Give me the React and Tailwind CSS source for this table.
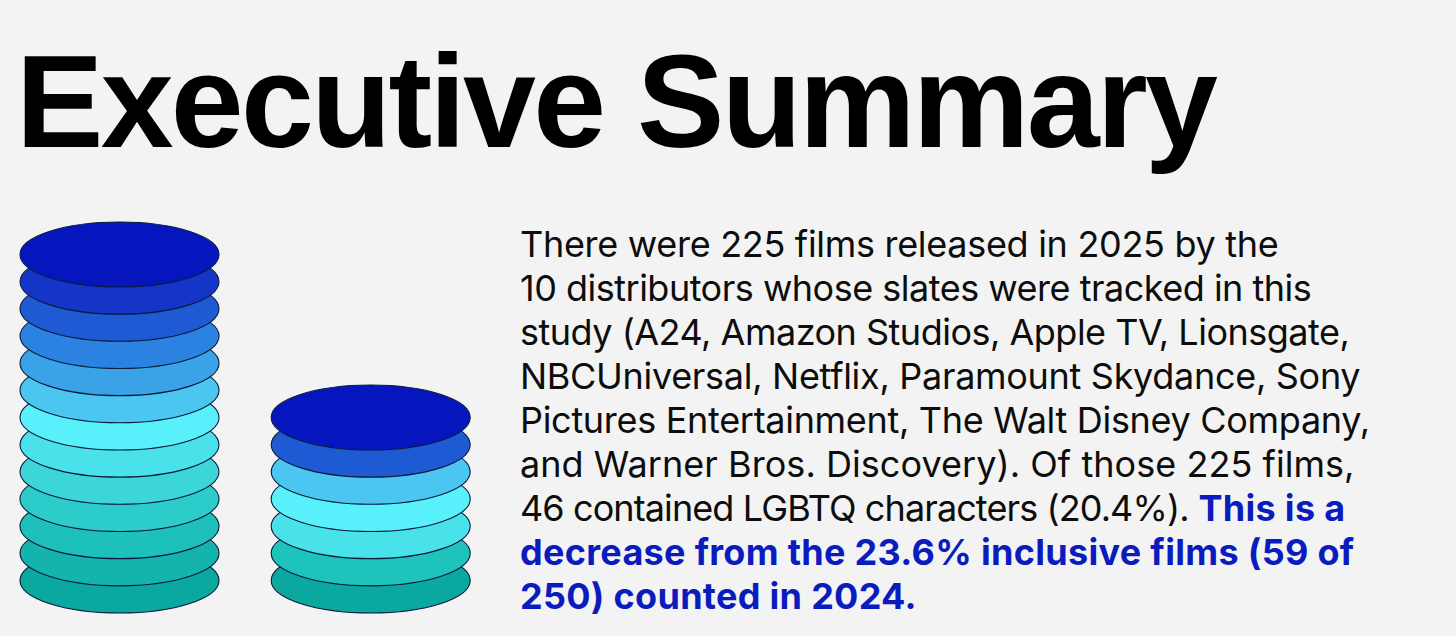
// Executive summary slide: stacked-coin chart beside the summary copy.

const tallStack = [
  "#0616bf", "#1535c9", "#1e5ad4", "#2b82e0", "#3aa2e6", "#4ac6f0", "#58f0fb",
  "#4ae2ea", "#3cd6da", "#2cccca", "#1ec0bc", "#14b4ac", "#0aa89e",
];
const shortStack = ["#0616bf", "#1e5ad4", "#4ac6f0", "#58f0fb", "#4ae2ea", "#1ec4bc", "#0aa89e"];

const STEP = 27.17;
const BOTTOM_CY = 360.5;

function CoinStack({ colors, cx }) {
  const n = colors.length;
  // draw from bottom up so each upper coin overlaps the one below
  return (
    <g>
      {colors
        .map((c, i) => ({ c, cy: BOTTOM_CY - (n - 1 - i) * STEP }))
        .reverse()
        .map(({ c, cy }, k) => (
          <ellipse key={k} cx={cx} cy={cy} rx={99.5} ry={32.5} fill={c} stroke="#0a1a3a" strokeWidth="1.1" />
        ))}
    </g>
  );
}

function Chart() {
  return (
    <svg width="500" height="400" viewBox="0 0 500 400" className="shrink-0">
      <CoinStack colors={tallStack} cx={119.5} />
      <CoinStack colors={shortStack} cx={370.7} />
    </svg>
  );
}

export default function App() {
  return (
    <div className="w-[1456px] h-[636px] overflow-hidden bg-[#f3f3f3] text-[#0d0d0d]">
      <h1
        className="pl-[16px] pt-[36px] text-[131px] leading-[131px] font-bold tracking-[-2.7px] whitespace-nowrap text-black"
        style={{ fontFamily: '"Liberation Sans", Arial, sans-serif' }}
      >
        Executive Summary
      </h1>
      <div className="flex mt-[53px]">
        <Chart />
        <p
          className="ml-[20px] mt-[2px] text-[36px] leading-[44px] tracking-[-0.3px] whitespace-nowrap"
          style={{ fontFamily: "Inter, sans-serif" }}
        >
          There were 225 films released in 2025 by the
          <br />
          <span className="tracking-[-0.5px]">10 distributors whose slates were tracked in this</span>
          <br />
          <span className="tracking-[-0.5px]">study (A24, Amazon Studios, Apple TV, Lionsgate,</span>
          <br />
          NBCUniversal, Netflix, Paramount Skydance, Sony
          <br />
          Pictures Entertainment, The Walt Disney Company,
          <br />
          <span className="tracking-[0.05px]">and Warner Bros. Discovery). Of those 225 films,</span>
          <br />
          <span className="tracking-[-0.9px]">46 contained LGBTQ characters (20.4%).</span>{" "}
          <span className="font-bold tracking-[0.3px] text-[#0b1cbf]">
            This is a
            <br />
            decrease from the 23.6% inclusive films (59 of
            <br />
            250) counted in 2024.
          </span>
        </p>
      </div>
    </div>
  );
}
